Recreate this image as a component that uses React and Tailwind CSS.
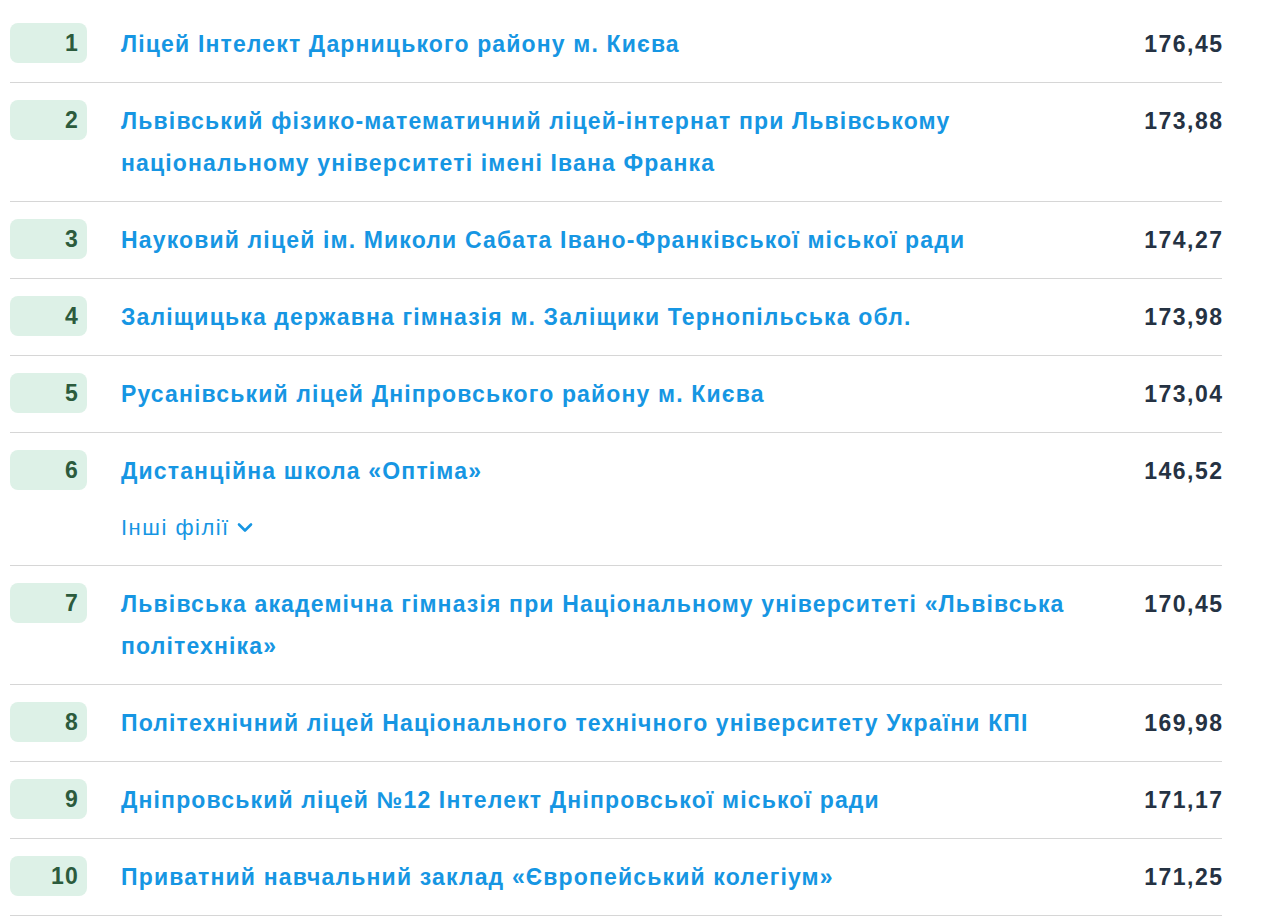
import React from "react";

const rows = [
  { n: 1, title: "Ліцей Інтелект Дарницького району м. Києва", score: "176,45" },
  { n: 2, title: "Львівський фізико-математичний ліцей-інтернат при Львівському національному університеті імені Івана Франка", score: "173,88" },
  { n: 3, title: "Науковий ліцей ім. Миколи Сабата Івано-Франківської міської ради", score: "174,27" },
  { n: 4, title: "Заліщицька державна гімназія м. Заліщики Тернопільська обл.", score: "173,98" },
  { n: 5, title: "Русанівський ліцей Дніпровського району м. Києва", score: "173,04" },
  { n: 6, title: "Дистанційна школа «Оптіма»", score: "146,52", branches: true },
  { n: 7, title: "Львівська академічна гімназія при Національному університеті «Львівська політехніка»", score: "170,45" },
  { n: 8, title: "Політехнічний ліцей Національного технічного університету України КПІ", score: "169,98" },
  { n: 9, title: "Дніпровський ліцей №12 Інтелект Дніпровської міської ради", score: "171,17" },
  { n: 10, title: "Приватний навчальний заклад «Європейський колегіум»", score: "171,25" },
];

export default function App() {
  return (
    <div className="w-[1280px] h-[920px] bg-white pt-[6px] pl-[10px] pr-[58px]" style={{ fontFamily: '"Liberation Sans", Arial, sans-serif' }}>
      {rows.map((r) => (
        <div key={r.n} className="flex items-start pt-[17px] pb-[17px] border-b border-[#d6d6d6]">
          <div className="w-[77px] h-[40px] shrink-0 rounded-[8px] bg-[#ddf1e7] flex items-center justify-end pr-[8px] text-[23px] tracking-[1.2px] font-bold text-[#2c5b3d]">
            {r.n}
          </div>
          <div className="ml-[34px] flex-1 min-w-0">
            <div className="text-[23px] leading-[42px] tracking-[1.15px] font-bold text-[#1696e3]">{r.title}</div>
            {r.branches && (
              <div className="mt-[14px] h-[42px] flex items-center gap-[6px] text-[22px] tracking-[1.5px] text-[#1696e3]">
                <span>Інші філії</span>
                <svg width="18" height="11" viewBox="0 0 18 11" fill="none">
                  <path d="M3 2.5 L9 8.5 L15 2.5" stroke="#1696e3" strokeWidth="2.6" strokeLinecap="round" strokeLinejoin="round" />
                </svg>
              </div>
            )}
          </div>
          <div className="w-[120px] ml-[20px] mr-[-1.5px] shrink-0 text-right text-[23px] leading-[42px] tracking-[1.5px] font-bold text-[#253243]">
            {r.score}
          </div>
        </div>
      ))}
    </div>
  );
}
